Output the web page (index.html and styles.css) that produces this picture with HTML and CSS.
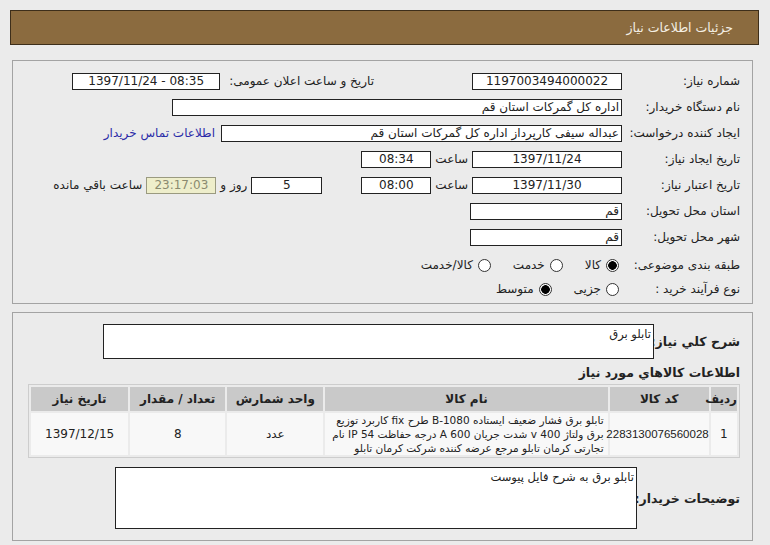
FILE: index.html
```html
<!DOCTYPE html>
<html lang="fa" dir="rtl">
<head>
<meta charset="utf-8">
<title>جزئیات اطلاعات نیاز</title>
<link rel="stylesheet" href="styles.css">
</head>
<body>
<div class="header">جزئیات اطلاعات نیاز</div>

<div class="panel panel-info">
  <div class="row">
    <div class="lbl">شماره نیاز:</div>
    <div class="box num w150">1197003494000022</div>
    <div class="lbl2">تاریخ و ساعت اعلان عمومی:</div>
    <div class="box num w146 ml8" dir="ltr">1397/11/24 - 08:35</div>
  </div>
  <div class="row">
    <div class="lbl">نام دستگاه خریدار:</div>
    <div class="box txt w448">اداره کل گمرکات استان قم</div>
  </div>
  <div class="row">
    <div class="lbl">ایجاد کننده درخواست:</div>
    <div class="box txt w399">عبداله سیفی کارپرداز اداره کل گمرکات استان قم</div>
    <a class="link" href="#">اطلاعات تماس خریدار</a>
  </div>
  <div class="row">
    <div class="lbl">تاریخ ایجاد نیاز:</div>
    <div class="box num w150" dir="ltr">1397/11/24</div>
    <div class="word">ساعت</div>
    <div class="box num w69" dir="ltr">08:34</div>
  </div>
  <div class="row">
    <div class="lbl">تاریخ اعتبار نیاز:</div>
    <div class="box num w150" dir="ltr">1397/11/30</div>
    <div class="word">ساعت</div>
    <div class="box num w69" dir="ltr">08:00</div>
    <div class="box num w70 mr-days">5</div>
    <div class="word">روز و</div>
    <div class="box num w69 remain" dir="ltr">23:17:03</div>
    <div class="word">ساعت باقي مانده</div>
  </div>
  <div class="row">
    <div class="lbl">استان محل تحویل:</div>
    <div class="box txt w150">قم</div>
  </div>
  <div class="row">
    <div class="lbl">شهر محل تحویل:</div>
    <div class="box txt w150">قم</div>
  </div>
  <div class="row row-radio">
    <div class="lbl">طبقه بندی موضوعی:</div>
    <div class="radios">
      <span class="radio on"></span><span class="rtext">کالا</span>
      <span class="radio"></span><span class="rtext">خدمت</span>
      <span class="radio"></span><span class="rtext">کالا/خدمت</span>
    </div>
  </div>
  <div class="row row-radio2">
    <div class="lbl">نوع فرآیند خرید :</div>
    <div class="radios">
      <span class="radio"></span><span class="rtext">جزیی</span>
      <span class="radio on"></span><span class="rtext">متوسط</span>
    </div>
  </div>
</div>

<div class="panel panel-goods">
  <div class="desc-row">
    <div class="blbl">شرح کلي نیاز:</div>
    <div class="area area-desc">تابلو برق</div>
  </div>
  <div class="section-title">اطلاعات کالاهاي مورد نیاز</div>
  <table class="goods">
    <colgroup>
      <col class="c-idx"><col class="c-code"><col class="c-name"><col class="c-unit"><col class="c-qty"><col class="c-date">
    </colgroup>
    <thead>
      <tr>
        <th>ردیف</th>
        <th>کد کالا</th>
        <th>نام کالا</th>
        <th>واحد شمارش</th>
        <th>تعداد / مقدار</th>
        <th>تاریخ نیاز</th>
      </tr>
    </thead>
    <tbody>
      <tr>
        <td>1</td>
        <td class="code">2283130076560028</td>
        <td class="name"><span class="ln">تابلو برق فشار ضعیف ایستاده B-1080 طرح fix کاربرد توزیع</span><span class="ln">برق ولتاژ 400 v شدت جریان 600 A درجه حفاظت IP 54 نام</span><span class="ln">تجارتی کرمان تابلو مرجع عرضه کننده شرکت کرمان تابلو</span></td>
        <td>عدد</td>
        <td>8</td>
        <td>1397/12/15</td>
      </tr>
    </tbody>
  </table>
  <div class="notes-row">
    <div class="blbl">توضیحات خریدار:</div>
    <div class="area area-notes">تابلو برق به شرح فایل پیوست</div>
  </div>
</div>
</body>
</html>
```

FILE: styles.css
```css
html, body {
  margin: 0;
  padding: 0;
}
body {
  width: 770px;
  height: 545px;
  overflow: hidden;
  background: #ebebeb;
  font-family: "DejaVu Sans", "Noto Sans", sans-serif;
  font-size: 12px;
  color: #222;
}
.header {
  margin: 10px 11px 0 10px;
  height: 33px;
  line-height: 33px;
  background: #8b6b3f;
  border: 1px solid #3d2e1a;
  color: #f4efe4;
  font-size: 12.5px;
  padding-right: 25px;
}
.panel {
  margin: 0 17px 0 12px;
  border: 1px solid #a3a3a3;
  box-sizing: border-box;
}
.panel-info {
  margin-top: 15px;
  height: 244px;
  padding: 7px 12px 0 0;
}
.row {
  display: flex;
  align-items: center;
  height: 26px;
}
.row-radio {
  height: 28px;
  margin-top: 1px;
}
.row-radio2 {
  height: 20px;
}
.lbl {
  width: 113px;
  margin-left: 5px;
  white-space: nowrap;
  color: #222;
}
.box {
  height: 15px;
  line-height: 15px;
  background: #fff;
  border: 1px solid #222;
  white-space: nowrap;
  overflow: hidden;
  font-size: 12px;
}
.num {
  text-align: center;
}
.txt {
  text-align: right;
  padding-right: 2px;
}
.w150 { width: 148px; }
.w146 { width: 146px; }
.w448 { width: 446px; }
.w399 { width: 397px; }
.w69 { width: 68px; }
.w70 { width: 69px; }
.ml8 { margin-right: 9px; }
.lbl2 {
  margin-right: 98px;
  white-space: nowrap;
}
.link {
  margin-right: 6px;
  color: #2b2ba8;
  text-decoration: none;
  white-space: nowrap;
}
.word {
  margin: 0 4px 0 4px;
  white-space: nowrap;
}
.mr-days {
  margin-right: 39px;
}
.remain {
  background: #eeeecb;
  border-color: #9a9a80;
  color: #8a8a70;
}
.radios {
  display: flex;
  align-items: center;
  margin-right: 3px;
}
.radio {
  width: 13px;
  height: 13px;
  border: 1px solid #333;
  border-radius: 50%;
  background: #fff;
  box-sizing: border-box;
}
.radio.on {
  background: radial-gradient(circle, #000 0 4px, #fff 4.6px);
}
.rtext {
  margin: 0 5px 0 22px;
}
.panel-goods {
  margin-top: 8px;
  height: 229px;
  padding: 11px 12px 0 0;
}
.desc-row {
  display: flex;
  align-items: center;
}
.blbl {
  font-weight: bold;
  font-size: 12.5px;
  white-space: nowrap;
  width: 84px;
}
.area {
  background: #fff;
  border: 1px solid #222;
  box-sizing: border-box;
  text-align: right;
  padding: 2px 2px;
  font-size: 11.5px;
}
.area-desc {
  width: 551px;
  height: 35px;
  margin-right: 2px;
}
.section-title {
  font-weight: bold;
  font-size: 12.5px;
  margin-top: 4px;
  height: 20px;
  line-height: 20px;
}
.goods {
  margin-top: 1px;
  width: 712px;
  table-layout: fixed;
  border: 1px solid #cdcdcd;
  border-collapse: separate;
  border-spacing: 2px;
  background: #ebebeb;
  font-size: 12px;
}
.c-idx { width: 26px; }
.c-code { width: 98px; }
.c-name { width: 279px; }
.c-unit { width: 95px; }
.c-qty { width: 94px; }
.c-date { width: 96px; }
.goods th {
  background: #c9c9c9;
  height: 24px;
  font-weight: bold;
  color: #222;
  padding: 0;
  white-space: nowrap;
}
.goods td {
  background: #f8f8f8;
  height: 42px;
  text-align: center;
  padding: 0 2px;
  line-height: 14px;
  white-space: nowrap;
}
.goods td.code {
  font-family: "Liberation Sans", "DejaVu Sans", sans-serif;
  font-size: 11.5px;
  padding: 0;
}
.goods td.name {
  text-align: right;
  font-size: 10.5px;
  padding: 0 4px;
  overflow: hidden;
}
.ln {
  display: block;
}
.notes-row {
  display: flex;
  align-items: center;
  margin-top: 9px;
}
.area-notes {
  width: 522px;
  height: 62px;
  margin-right: 7px;
}
.notes-row .blbl {
  width: 96px;
}
```
